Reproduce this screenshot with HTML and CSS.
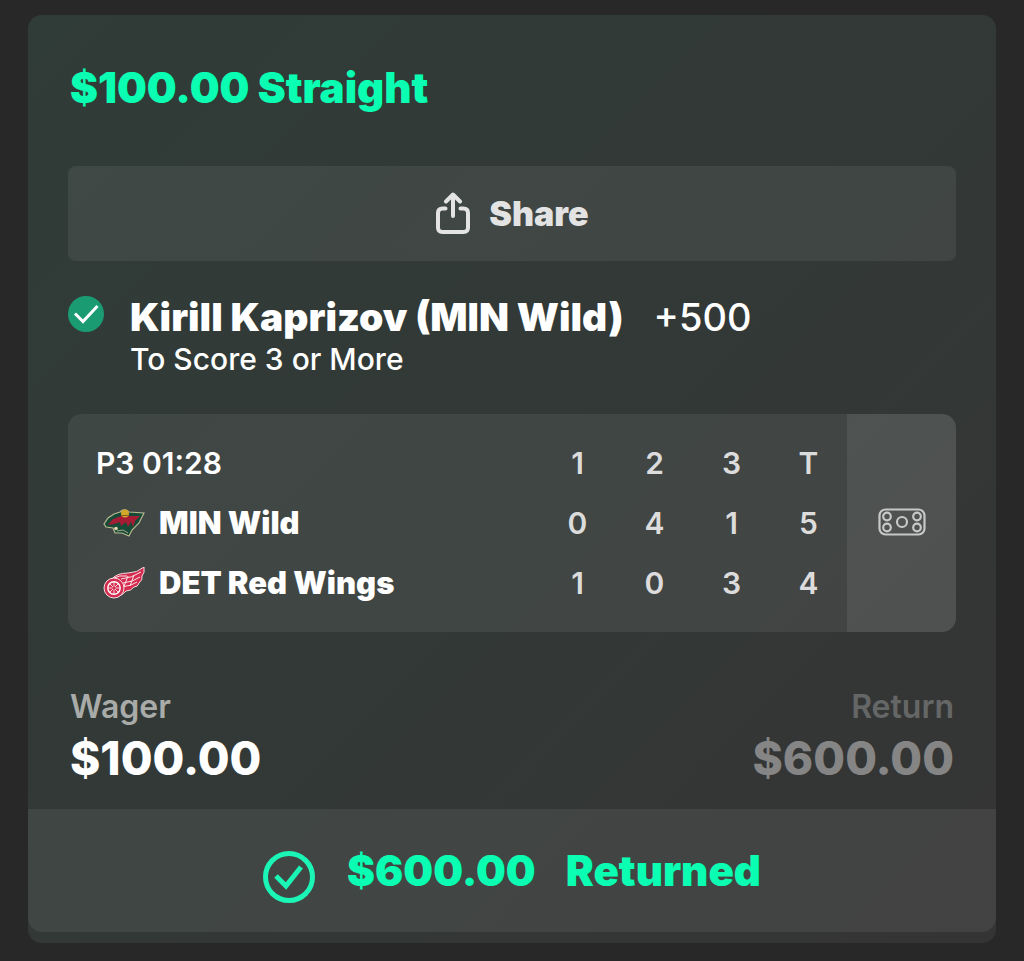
FILE: index.html
```html
<!DOCTYPE html>
<html lang="en">
<head>
  <meta charset="UTF-8" />
  <meta name="viewport" content="width=device-width, initial-scale=1.0"/>
  <title>Bet Slip</title>
  <link rel="stylesheet" href="styles.css">
</head>
<body>
  <div class="bet-card">
    <div class="bet-body">
      <h1 class="bet-title">$100.00 Straight</h1>

      <button type="button" class="share-btn">
        <svg class="share-icon" viewBox="0 0 36 44" aria-hidden="true">
          <path d="M10.500 16.500H7.500Q3 16.500 3 21V35.500Q3 40 7.500 40H28.500Q33 40 33 35.500V21Q33 16.500 28.500 16.500H25.500"/>
          <path d="M18 24V3M11 9.500L18 2.500L25 9.500"/>
        </svg>
        <span>Share</span>
      </button>

      <!-- Selection -->
      <div class="selection">
        <svg class="won-icon" viewBox="0 0 36 36" aria-hidden="true">
          <circle cx="18" cy="18" r="18"/>
          <path d="M7 17.500L15 25.500L29.500 10"/>
        </svg>
        <div>
          <div class="selection-line">
            <h2 class="player">Kirill Kaprizov (MIN Wild)</h2>
            <span class="odds">+500</span>
          </div>
          <p class="market">To Score 3 or More</p>
        </div>
      </div>

      <!-- Scoreboard -->
      <div class="scoreboard">
        <table class="scores">
          <thead>
            <tr>
              <th class="clock" scope="col">P3 01:28</th>
              <th scope="col">1</th>
              <th scope="col">2</th>
              <th scope="col">3</th>
              <th scope="col">T</th>
            </tr>
          </thead>
          <tbody>
            <tr>
              <th scope="row">
                <div class="team">
                  <svg class="team-logo" viewBox="0 0 42 32" aria-hidden="true">
                    <path d="M1 17L5 11L11 7L17 5Q21 1 26 5L41 6L36 16L29 23L26 29L19 26L12 26L10 21L3 20Z" fill="#174b37" stroke="#b9b78f" stroke-width="1.200"/>
                    <path d="M5 18L10 12L18 9H37L32 14L30 20L28 15L25 20L23 15L18 19L17 15L11 17Z" fill="#a51c35"/>
                    <path d="M11 10Q20 6 32 8" fill="none" stroke="#174b37" stroke-width="1.500"/>
                    <circle cx="22" cy="6.500" r="4" fill="#d0a92b"/>
                    <path d="M18.500 8.500H25.500" stroke="#8a5a25" stroke-width="1"/>
                    <circle cx="13" cy="21.500" r="1.800" fill="#e2d6ae"/>
                    <path d="M14 24L20 23L25 26" fill="none" stroke="#c9c29b" stroke-width=".8"/>
                  </svg>
                  <span>MIN Wild</span>
                </div>
              </th>
              <td>0</td>
              <td>4</td>
              <td>1</td>
              <td>5</td>
            </tr>
            <tr>
              <th scope="row">
                <div class="team">
                  <svg class="team-logo" viewBox="0 0 42 32" aria-hidden="true">
                    <path d="M8 13Q13 6 25 6Q34 6 41 0Q42 6 39 9Q40 13 36 16Q35 20 31 20Q28 24 23 24Q20 28 14 30Z" fill="#d42b4f" stroke="#f2dce0" stroke-width="1"/>
                    <path d="M18 12Q29 11 38 5M20 16Q30 15 37 10M21 19.500Q28 19 34 15M11 11Q16 8 24 9M25 9L20 22M31 8L27 19" fill="none" stroke="#fbe6ea" stroke-width="1"/>
                    <circle cx="11" cy="21" r="10" fill="#d42b4f" stroke="#f2dce0"/>
                    <circle cx="11" cy="21" r="6.200" fill="#d42b4f" stroke="#fff" stroke-width="1.400"/>
                    <path d="M11 15V27M5 21H17M7 17L15 25M15 17L7 25" stroke="#fff" stroke-width=".8"/>
                    <circle cx="11" cy="21" r="1.600" fill="#d42b4f"/>
                  </svg>
                  <span>DET Red Wings</span>
                </div>
              </th>
              <td>1</td>
              <td>0</td>
              <td>3</td>
              <td>4</td>
            </tr>
          </tbody>
        </table>
        <button type="button" class="cash-btn" aria-label="Cash out">
          <svg class="cash-icon" viewBox="0 0 48 28" aria-hidden="true">
            <rect x="1.500" y="1.500" width="45" height="25" rx="6"/>
            <circle cx="9" cy="8.500" r="3.800"/>
            <circle cx="9" cy="19.500" r="3.800"/>
            <circle cx="24" cy="14" r="5"/>
            <circle cx="39" cy="8.500" r="3.800"/>
            <circle cx="39" cy="19.500" r="3.800"/>
          </svg>
        </button>
      </div>

      <!-- Wager / return -->
      <dl class="amounts">
        <div>
          <dt>Wager</dt>
          <dd>$100.00</dd>
        </div>
        <div class="return">
          <dt>Return</dt>
          <dd>$600.00</dd>
        </div>
      </dl>
    </div>

    <div class="bet-result">
      <svg class="result-icon" viewBox="0 0 52 52" aria-hidden="true">
        <circle cx="26" cy="26" r="23.500"/>
        <path d="M13 25L23 35L38 16"/>
      </svg>
      <div class="result-text">
        <span>$600.00</span>
        <span>Returned</span>
      </div>
    </div>
  </div>
</body>
</html>
```
FILE: styles.css
```css
* {
  box-sizing: border-box;
}

body {
  margin: 0;
  padding: 15px 28px 18px;
  background-color: #282828;
  font-family: 'Inter', sans-serif;
  color: white;
}

h1, h2, p, dl, dd {
  margin: 0;
}

button {
  border: none;
  padding: 0;
  font-family: inherit;
  cursor: pointer;
}

.bet-card {
  padding-bottom: 11px;
  border-radius: 14px;
  background: linear-gradient(135deg, #303c38 0%, #323936 45%, #343635 80%, #343434 100%);
}

.bet-body {
  padding: 49px 40px 21px;
}

.bet-title {
  padding: 0 2px;
  font-size: 42px;
  line-height: 48px;
  font-weight: 900;
  color: #0affb3;
}

.share-btn {
  display: flex;
  align-items: center;
  justify-content: center;
  gap: 18px;
  width: 100%;
  height: 95px;
  margin-top: 54px;
  border-radius: 8px;
  background-color: rgba(255, 255, 255, 0.07);
  color: #e3e3e3;
  font-size: 34px;
  font-weight: 900;
}

.share-icon {
  width: 36px;
  height: 44px;
  fill: none;
  stroke: #e3e3e3;
  stroke-width: 4;
  stroke-linecap: round;
  stroke-linejoin: round;
}

/* Selection */
.selection {
  display: flex;
  gap: 26px;
  margin-top: 35px;
}

.won-icon {
  flex: none;
  width: 36px;
  height: 36px;
  fill: #1b9b72;
}

.won-icon path {
  fill: none;
  stroke: white;
  stroke-width: 3;
}

.selection-line {
  display: flex;
  align-items: baseline;
  gap: 30px;
}

.player {
  font-size: 39px;
  line-height: 42px;
  font-weight: 900;
}

.odds {
  font-size: 38px;
  line-height: 42px;
  font-weight: 500;
}

.market {
  font-size: 30px;
  line-height: 42px;
  font-weight: 500;
}

/* Scoreboard */
.scoreboard {
  display: flex;
  margin-top: 34px;
  border-radius: 14px;
  background-color: rgba(255, 255, 255, 0.07);
  overflow: hidden;
}

.scores {
  flex: 1;
  margin: 19px 0 19px 28px;
  border-collapse: collapse;
  font-size: 30px;
  line-height: 36px;
}

.scores th,
.scores td {
  height: 60px;
  padding: 0;
}

.scores td,
.scores thead th {
  width: 77px;
  text-align: center;
  font-weight: 600;
  color: #dcdcdc;
}

.scores thead .clock {
  width: auto;
  text-align: left;
  color: white;
}

.team {
  display: flex;
  align-items: center;
  gap: 14px;
  padding-left: 7px;
  font-size: 31px;
  font-weight: 900;
}

.team-logo {
  width: 42px;
  height: 32px;
}

.cash-btn {
  width: 109px;
  background-color: rgba(255, 255, 255, 0.07);
}

.cash-icon {
  width: 48px;
  height: 28px;
  fill: none;
  stroke: #c8c8c8;
  stroke-width: 2.200;
}

/* Wager / return */
.amounts {
  display: flex;
  justify-content: space-between;
  margin-top: 54px;
  padding: 0 2px;
}

.amounts dt {
  font-size: 32px;
  line-height: 42px;
  font-weight: 600;
  color: #a9aba9;
}

.amounts dd {
  font-size: 46px;
  line-height: 60px;
  font-weight: 800;
}

.return {
  text-align: right;
}

.amounts .return dt {
  color: #656666;
}

.amounts .return dd {
  color: #858585;
}

/* Result bar */
.bet-result {
  display: flex;
  align-items: center;
  justify-content: center;
  gap: 32px;
  padding: 38px 20px 25px;
  border-radius: 0 0 14px 14px;
  background-color: rgba(255, 255, 255, 0.07);
  color: #0affb3;
}

.result-icon {
  width: 52px;
  height: 52px;
  fill: none;
  stroke: #1bf5b6;
  stroke-width: 5;
}

.result-text {
  display: flex;
  gap: 30px;
  padding-bottom: 12px;
  font-size: 42px;
  line-height: 48px;
  font-weight: 900;
}
```
